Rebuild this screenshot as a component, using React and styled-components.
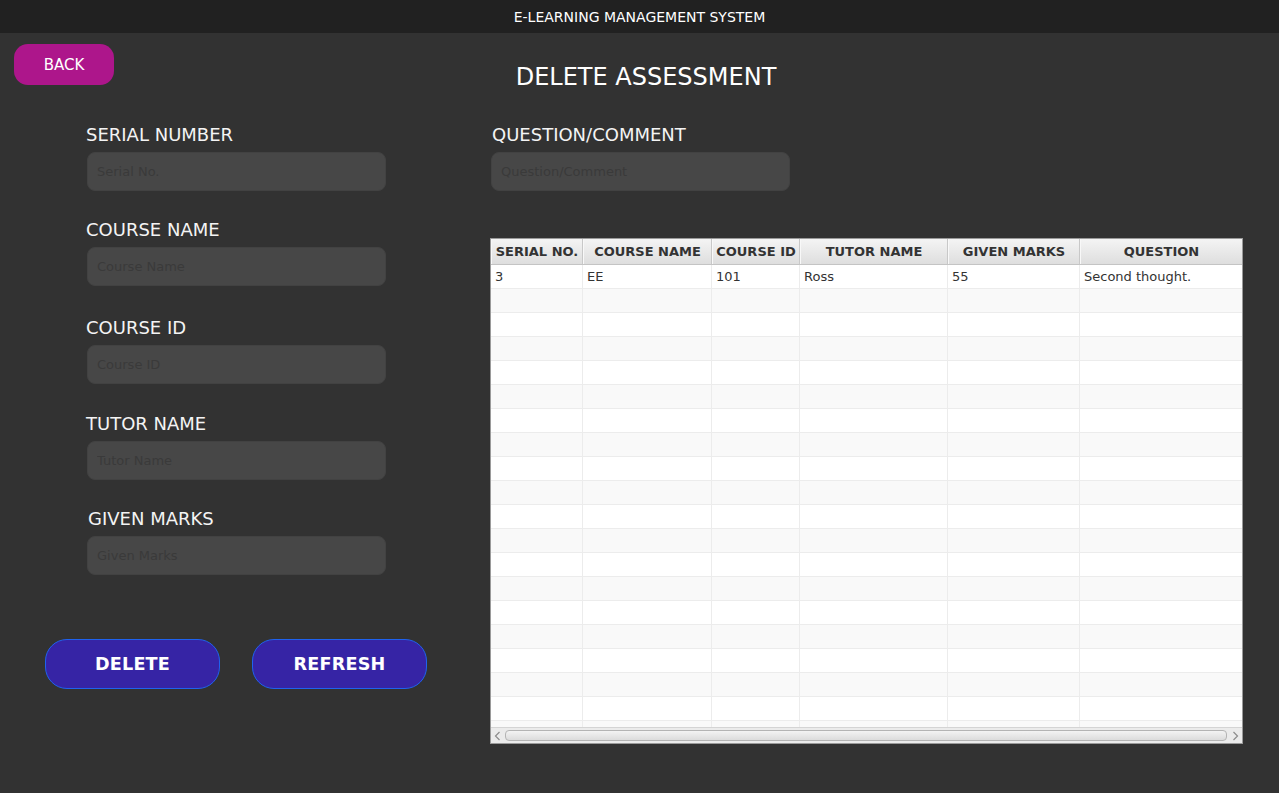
import styled, { createGlobalStyle } from "styled-components";

const GlobalStyle = createGlobalStyle`
    html, body {
        margin: 0;
        padding: 0;
        background: #323232;
        font-family: "DejaVu Sans", "Liberation Sans", sans-serif;
    }
`;

const Page = styled.div`
    width: 1279px;
    height: 793px;
    background: #323232;
    overflow: hidden;
`;

const TopBar = styled.div`
    height: 33px;
    background: #212121;
    display: flex;
    align-items: center;
    justify-content: center;
    color: #ffffff;
    font-size: 14px;
`;

const HeaderRow = styled.div`
    display: grid;
    grid-template-columns: 100px 1fr 100px;
    padding: 11px 14px 0 14px;
`;

const BackButton = styled.button`
    height: 41px;
    border: none;
    border-radius: 14px;
    background: #ad168b;
    color: #ffffff;
    font-family: inherit;
    font-size: 15px;
    cursor: pointer;
`;

const Title = styled.h1`
    margin: 19px 0 0 13px;
    font-size: 24px;
    font-weight: normal;
    line-height: 28px;
    color: #ffffff;
    text-align: center;
`;

const Content = styled.div`
    display: grid;
    grid-template-columns: 445px 753px;
    padding: 0 0 0 45px;
    margin-top: 33px;
`;

const LeftPanel = styled.div`
    display: flex;
    flex-direction: column;
`;

const Fields = styled.div`
    display: flex;
    flex-direction: column;
    gap: 29px;
    padding-left: 41px;
`;

const Field = styled.div`
    display: flex;
    flex-direction: column;
    gap: 6px;
    width: 300px;
    margin-top: ${({ $shift }) => $shift || 0}px;
`;

const Label = styled.label`
    font-size: 18px;
    line-height: 22px;
    color: #f4f4f4;
    padding-left: ${({ $indent }) => $indent || 0}px;
`;

const Input = styled.input`
    box-sizing: border-box;
    width: 299px;
    height: 39px;
    margin-left: 1px;
    padding: 0 9px;
    border: 1px solid #424242;
    border-radius: 8px;
    background: #474747;
    color: #dddddd;
    font-family: inherit;
    font-size: 13px;
    outline: none;

    &::placeholder {
        color: #3a3a3a;
    }
`;

const ButtonRow = styled.div`
    display: flex;
    gap: 32px;
    margin-top: 64px;
`;

const ActionButton = styled.button`
    width: 175px;
    height: 50px;
    box-sizing: border-box;
    border: 1px solid #1f62ee;
    border-radius: 22px;
    background: #3624a5;
    color: #ffffff;
    font-family: inherit;
    font-size: 17.6px;
    font-weight: bold;
    letter-spacing: 0.2px;
    cursor: pointer;
`;

const RightPanel = styled.div`
    display: flex;
    flex-direction: column;
`;

const TableBox = styled.div`
    margin-top: 47px;
    width: 753px;
    height: 506px;
    box-sizing: border-box;
    border: 1px solid #9a9a9a;
    background: #ffffff;
    display: flex;
    flex-direction: column;
    overflow: hidden;
`;

const COLS = "92px 129px 88px 148px 132px 162px";

const TableHead = styled.div`
    display: grid;
    grid-template-columns: ${COLS};
    height: 26px;
    flex-shrink: 0;
    background: linear-gradient(#f4f4f4, #dedede);
    border-bottom: 1px solid #c4c4c4;
    box-sizing: border-box;
`;

const HeaderCell = styled.div`
    display: flex;
    align-items: center;
    justify-content: center;
    border-right: 1px solid #c8c8c8;
    border-left: 1px solid #f8f8f8;
    font-size: 13px;
    font-weight: bold;
    color: #333333;
    white-space: nowrap;
    overflow: hidden;

    &:last-child {
        border-right: none;
    }
`;

const Body = styled.div`
    flex: 1;
    overflow: hidden;
`;

const Row = styled.div`
    display: grid;
    grid-template-columns: ${COLS};
    height: 24px;
    box-sizing: border-box;
    border-bottom: 1px solid #ececec;
    background: ${({ $odd }) => ($odd ? "#f9f9f9" : "#ffffff")};
`;

const Cell = styled.div`
    display: flex;
    align-items: center;
    padding-left: 4px;
    border-right: 1px solid #ececec;
    font-size: 13px;
    color: #333333;
    white-space: nowrap;
    overflow: hidden;

    &:last-child {
        border-right: none;
    }
`;

const ScrollBar = styled.div`
    flex-shrink: 0;
    height: 15px;
    display: flex;
    align-items: center;
    gap: 2px;
    padding: 0 1px 0 0;
    background: #ebebeb;
    border-top: 1px solid #d4d4d4;
`;

const Arrow = styled.div`
    width: 12px;
    display: flex;
    align-items: center;
    justify-content: center;
`;

const Thumb = styled.div`
    flex: 1;
    height: 11px;
    box-sizing: border-box;
    border: 1px solid #b4b4b4;
    border-radius: 4px;
    background: linear-gradient(#f3f3f3, #dcdcdc);
`;

const columns = ["SERIAL NO.", "COURSE NAME", "COURSE ID", "TUTOR NAME", "GIVEN MARKS", "QUESTION"];

const rows = [["3", "EE", "101", "Ross", "55", "Second thought."]];

const fields = [
    { label: "SERIAL NUMBER", placeholder: "Serial No." },
    { label: "COURSE NAME", placeholder: "Course Name", shift: -1 },
    { label: "COURSE ID", placeholder: "Course ID", shift: 2 },
    { label: "TUTOR NAME", placeholder: "Tutor Name" },
    { label: "GIVEN MARKS", placeholder: "Given Marks", indent: 2, shift: -1 },
];

function ArrowIcon({ dir }) {
    return (
        <svg width="7" height="10" viewBox="0 0 7 10">
            <path
                d={dir === "left" ? "M5.5 1 L1.5 5 L5.5 9" : "M1.5 1 L5.5 5 L1.5 9"}
                fill="none"
                stroke="#8c8c8c"
                strokeWidth="1.2"
            />
        </svg>
    );
}

export default function App() {
    const bodyRows = Array.from({ length: 20 }, (_, i) => rows[i] || ["", "", "", "", "", ""]);

    return (
        <>
            <GlobalStyle />
            <Page>
                <TopBar>E-LEARNING MANAGEMENT SYSTEM</TopBar>
                <HeaderRow>
                    <BackButton>BACK</BackButton>
                    <Title>DELETE ASSESSMENT</Title>
                </HeaderRow>
                <Content>
                    <LeftPanel>
                        <Fields>
                            {fields.map((f) => (
                                <Field key={f.label} $shift={f.shift}>
                                    <Label $indent={f.indent}>{f.label}</Label>
                                    <Input placeholder={f.placeholder} />
                                </Field>
                            ))}
                        </Fields>
                        <ButtonRow>
                            <ActionButton>DELETE</ActionButton>
                            <ActionButton>REFRESH</ActionButton>
                        </ButtonRow>
                    </LeftPanel>
                    <RightPanel>
                        <Field>
                            <Label $indent={2}>QUESTION/COMMENT</Label>
                            <Input placeholder="Question/Comment" />
                        </Field>
                        <TableBox>
                            <TableHead>
                                {columns.map((c) => (
                                    <HeaderCell key={c}>{c}</HeaderCell>
                                ))}
                            </TableHead>
                            <Body>
                                {bodyRows.map((r, i) => (
                                    <Row key={i} $odd={i % 2 === 1}>
                                        {r.map((v, j) => (
                                            <Cell key={j}>{v}</Cell>
                                        ))}
                                    </Row>
                                ))}
                            </Body>
                            <ScrollBar>
                                <Arrow>
                                    <ArrowIcon dir="left" />
                                </Arrow>
                                <Thumb />
                                <Arrow>
                                    <ArrowIcon dir="right" />
                                </Arrow>
                            </ScrollBar>
                        </TableBox>
                    </RightPanel>
                </Content>
            </Page>
        </>
    );
}
